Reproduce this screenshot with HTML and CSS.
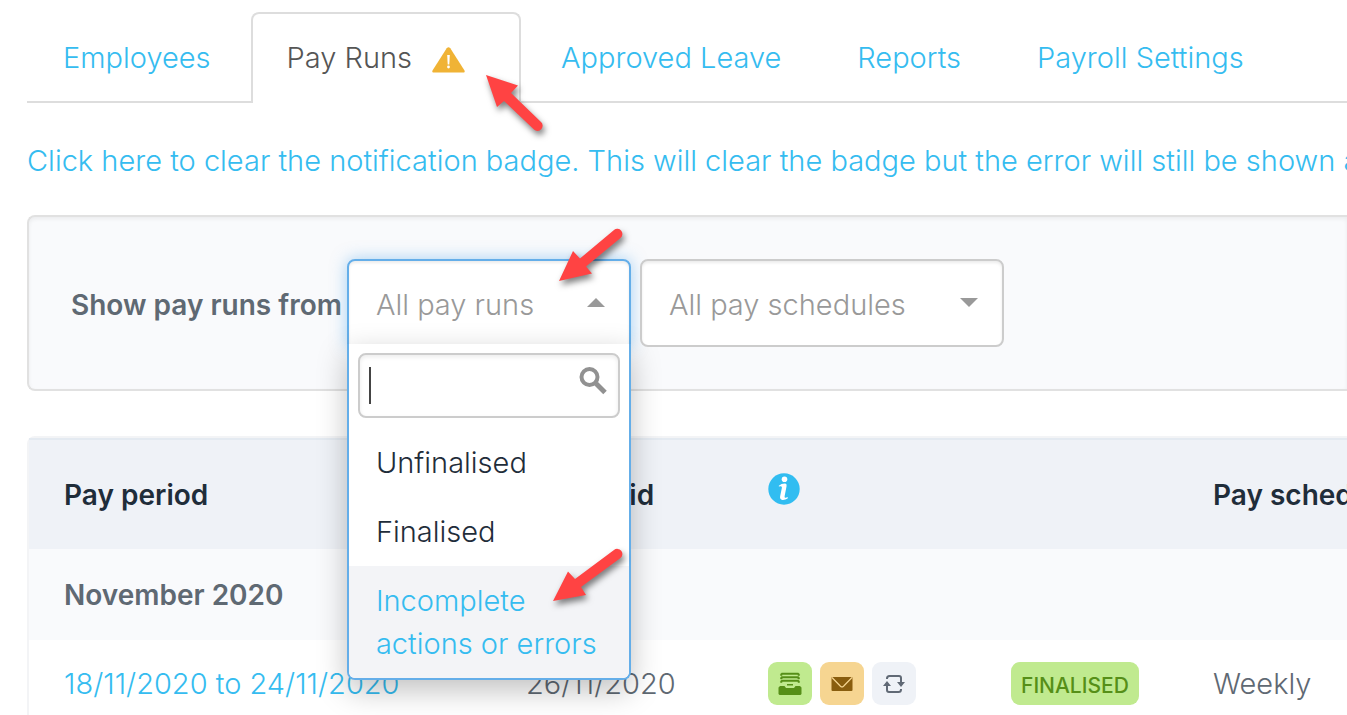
FILE: index.html
```html
<!DOCTYPE html>
<html lang="en">
<head>
    <meta charset="UTF-8">
    <meta name="viewport" content="width=device-width, initial-scale=1.0">
    <title>Pay Runs</title>
    <link rel="stylesheet" href="styles.css">
</head>
<body>
  <nav class="tabs">
    <a class="tab" href="#">Employees</a>
    <a class="tab active" href="#">Pay Runs
      <svg class="warning" width="33" height="26" viewBox="0 0 33 26">
        <path d="M14.7 1.2Q16.5-.8 18.3 1.2L32.5 23.5Q33.2 25.6 31 25.6H2Q-.2 25.6.5 23.5Z" fill="#f0b335"/>
        <path d="M15.2 8h2.6l-.5 9.5h-1.6z" fill="#fff"/>
        <circle cx="16.5" cy="20" r="1.4" fill="#fff"/>
      </svg>
    </a>
    <a class="tab" href="#">Approved Leave</a>
    <a class="tab" href="#">Reports</a>
    <a class="tab" href="#">Payroll Settings</a>
  </nav>

  <a class="clear-badge" href="#">Click here to clear the notification badge. This will clear the badge but the error will still be shown above</a>

  <form class="filters">
    <label for="payRuns">Show pay runs from</label>
    <div class="dropdown">
      <button type="button" id="payRuns" class="dropdown-toggle" aria-haspopup="listbox" aria-expanded="true">All pay runs
        <svg width="18" height="9" viewBox="0 0 18 9"><path d="M0 9L9 0l9 9z" fill="#999"/></svg>
      </button>
      <div class="dropdown-menu">
        <div class="search">
          <input type="text" aria-label="Search pay runs">
          <svg width="30" height="30" viewBox="0 0 30 30">
            <circle cx="11.5" cy="11" r="8" fill="none" stroke="#919191" stroke-width="4"/>
            <path d="M18 17.5l9 9" stroke="#919191" stroke-width="5"/>
          </svg>
        </div>
        <ul role="listbox" aria-label="Pay runs">
          <li role="option">Unfinalised</li>
          <li role="option">Finalised</li>
          <li role="option" class="highlighted">Incomplete actions or errors</li>
        </ul>
      </div>
    </div>
    <div class="select-wrap">
      <select aria-label="Pay schedule">
        <option>All pay schedules</option>
      </select>
      <svg width="18" height="9" viewBox="0 0 18 9"><path d="M0 0h18L9 9z" fill="#999"/></svg>
    </div>
  </form>

  <div class="table-box">
    <table>
      <colgroup>
        <col class="col-period">
        <col class="col-paid">
        <col class="col-actions">
        <col class="col-status">
        <col>
      </colgroup>
      <thead>
        <tr>
          <th>Pay period</th>
          <th>Date paid</th>
          <th>
            <svg class="info" width="32" height="32" viewBox="0 0 32 32">
              <circle cx="16" cy="16" r="15.7" fill="#31bdf1"/>
              <circle cx="16.5" cy="6.2" r="2.8" fill="#fff"/>
              <path d="M10.8 12.8Q13.5 10.5 17.2 10.6Q19 10.8 18.6 13L16.6 23.2Q16.4 25 17.8 24.7L19.8 24.1L19.6 25.6Q17.2 27.2 14.4 27Q11.6 26.5 12.1 23.6L13.9 14.7Q14.1 13.2 12.8 13.2L10.9 13.6Z" fill="#fff"/>
            </svg>
          </th>
          <th></th>
          <th>Pay schedule</th>
        </tr>
      </thead>
      <tbody>
        <tr class="month">
          <td colspan="5">November 2020</td>
        </tr>
        <tr>
          <td><a href="#">18/11/2020 to 24/11/2020</a></td>
          <td>26/11/2020</td>
          <td>
            <div class="chips">
              <span class="chip green">
                <svg width="24" height="24" viewBox="0 0 24 24" fill="#568f18">
                  <path d="M3.5 1h17l1 1.2v1.3H20l-.5-1h-15l-.5 1H2.500V2.200zM3.500 4.500h17l1 1.200V7H20l-.5-1h-15L4 7H2.500V5.700zM3.500 8h17l1 1.200v1.300H20l-.5-1h-15l-.5 1H2.500V9.200z" stroke="#568f18" stroke-width=".5"/>
                  <path d="M9 12h6v1.500H9zM2 14h4.500L8 16h8l1.500-2H22l1.500 1.500V22l-1 1h-21l-1-1v-6.500z"/>
                </svg>
              </span>
              <span class="chip orange">
                <svg width="22" height="16" viewBox="0 0 22 16">
                  <rect x=".5" y="1" width="21" height="14" rx="1" fill="#895d0e"/>
                  <path d="M1 1.500l8.500 8.700q1.500 1.400 3 0L21 1.500" fill="none" stroke="#f6d591" stroke-width="1.2"/>
                </svg>
              </span>
              <span class="chip grey">
                <svg width="22" height="18" viewBox="0 0 22 18">
                  <path d="M4 4V3.500Q4 1 6.500 1H16q2 0 2 2v6M18 14v.5q0 2.500-2.500 2.500H6q-2 0-2-2V9" fill="none" stroke="#606975" stroke-width="2"/>
                  <path d="M14 7h8l-4 5zM0 11h8L4 6z" fill="#606975"/>
                </svg>
              </span>
            </div>
          </td>
          <td><span class="status">FINALISED</span></td>
          <td>Weekly</td>
        </tr>
      </tbody>
    </table>
  </div>

  <!-- red arrows pointing at the warning, the filter and the highlighted option -->
  <svg class="arrows" width="640" height="620" viewBox="0 0 640 620">
    <g fill="#ff4343">
      <path d="M486 75L518 85.500L511 93L541 122A5 5 0 0 1 534 129.500L504 101L497 107Z"/>
      <path d="M559 281L573 251L580 258.500L614 230A5 5 0 0 1 620.500 238L586 266.500L592 273.500Z"/>
      <path d="M553 601L568 571.500L575 579L614 550A5 5 0 0 1 620.500 558L581 587L586 595Z"/>
    </g>
  </svg>
</body>
</html>
```
FILE: styles.css
```css
* {
    box-sizing: border-box;
}
body {
    font-family: Inter, Arial, sans-serif;
    font-size: 29px;
    font-weight: 300;
    line-height: 43px;
    color: #5f6973;
    margin: 0;
    padding: 12px 0 0 27px;
    background-color: white;
    position: relative;
    overflow: hidden;
}
a {
    color: #35bcf0;
    text-decoration: none;
}
.tabs {
    display: flex;
    gap: 4px;
    border-bottom: 2px solid #ddd;
}
.tab {
    display: flex;
    white-space: nowrap;
    padding: 22px 34px;
    border: 2px solid transparent;
    border-bottom: none;
}
.tab.active {
    color: #555;
    background-color: white;
    border-color: #ddd;
    border-radius: 8px 8px 0 0;
    margin-bottom: -2px;
    padding-right: 54px;
}
.warning {
    margin: 11px 0 0 20px;
}
.clear-badge {
    display: block;
    white-space: nowrap;
    margin: 36px 0 33px;
}
.filters {
    display: flex;
    align-items: center;
    padding: 42px;
    background-color: #f9fafc;
    border: 2px solid #e1e1e1;
    border-right: none;
    border-radius: 8px 0 0 8px;
    box-shadow: inset 0 2px 4px rgba(0, 0, 0, 0.06);
}
.filters label {
    font-size: 28px;
    font-weight: 600;
    white-space: nowrap;
    padding-top: 4px;
    margin-right: 5px;
}
.dropdown {
    position: relative;
    width: 284px;
    margin-right: 9px;
}
.dropdown-toggle, .select-wrap select {
    width: 100%;
    height: 88px;
    padding: 2px 27px 0;
    font: inherit;
    color: #999;
    text-align: left;
    background-color: white;
    border: 2px solid #ccc;
    border-radius: 8px;
    box-shadow: inset 0 2px 3px rgba(0, 0, 0, 0.08);
}
.dropdown-toggle {
    display: flex;
    justify-content: space-between;
    align-items: center;
    padding-right: 24px;
    border-color: #64aee9;
    border-radius: 8px 8px 0 0;
    box-shadow: inset 0 2px 3px rgba(0, 0, 0, 0.08), 0 0 16px rgba(82, 168, 236, 0.5);
}
.dropdown-toggle svg {
    margin-bottom: 4px;
}
.dropdown-menu {
    position: absolute;
    top: 85px;
    left: 0;
    width: 100%;
    background-color: white;
    border: 2px solid #64aee9;
    border-top: none;
    border-radius: 0 0 8px 8px;
    box-shadow: 0 10px 30px rgba(0, 0, 0, 0.25);
    overflow: hidden;
}
.search {
    position: relative;
    padding: 9px 9px 10px;
}
.search input {
    display: block;
    width: 100%;
    height: 65px;
    padding: 0 48px 0 10px;
    font: inherit;
    border: 2px solid #ccc;
    border-radius: 8px;
    outline: none;
    /* text cursor */
    background: linear-gradient(#444, #444) 9px 12px / 2px 37px no-repeat white;
    box-shadow: inset 0 2px 4px rgba(0, 0, 0, 0.08);
}
.search svg {
    position: absolute;
    top: 22px;
    right: 21px;
}
.dropdown-menu ul {
    list-style: none;
    margin: 0;
    padding: 0;
}
.dropdown-menu li {
    padding: 13px 27px;
    color: #1f2d3a;
}
.dropdown-menu li.highlighted {
    color: #35bcf0;
    background-color: #f3f4f7;
}
.select-wrap {
    position: relative;
    width: 364px;
}
.select-wrap select {
    display: block;
    appearance: none;
}
.select-wrap svg {
    position: absolute;
    top: 39px;
    right: 26px;
}
.table-box {
    margin-top: 45px;
    border: 2px solid #f3f4f6;
    border-right: none;
    border-bottom: none;
    border-radius: 8px 0 0 0;
}
table {
    width: 100%;
    table-layout: fixed;
    border-collapse: collapse;
}
.col-period {
    width: 462px;
}
.col-paid {
    width: 242px;
}
.col-actions {
    width: 243px;
}
.col-status {
    width: 202px;
}
th, td {
    padding: 22px 0 26px 35px;
    text-align: left;
    white-space: nowrap;
    font-weight: 300;
}
th {
    padding: 35px 0 32px 35px;
    font-size: 28px;
    font-weight: 600;
    color: #1f2d3a;
    background-color: #eff2f7;
    box-shadow: inset 0 2px #e4eaf1;
}
.month td {
    padding: 25px 0 23px 35px;
    font-size: 28px;
    font-weight: 600;
    background-color: #f9fafc;
}
.info {
    display: block;
    margin-bottom: 12px;
}
.chips {
    display: flex;
    gap: 8px;
}
.chip {
    display: flex;
    justify-content: center;
    align-items: center;
    width: 44px;
    height: 43px;
    border-radius: 9px;
}
.green, .status {
    background-color: #c0ea8f;
}
.orange {
    background-color: #f6d591;
}
.grey {
    background-color: #eff2f7;
}
.status {
    display: inline-block;
    padding: 5px 10px 0;
    font-size: 21px;
    font-weight: 500;
    line-height: 38px;
    vertical-align: top;
    color: #568f18;
    border-radius: 9px;
}
.arrows {
    position: absolute;
    top: 0;
    left: 0;
    pointer-events: none;
    filter: drop-shadow(2px 4px 3px rgba(0, 0, 0, 0.5));
}
```
